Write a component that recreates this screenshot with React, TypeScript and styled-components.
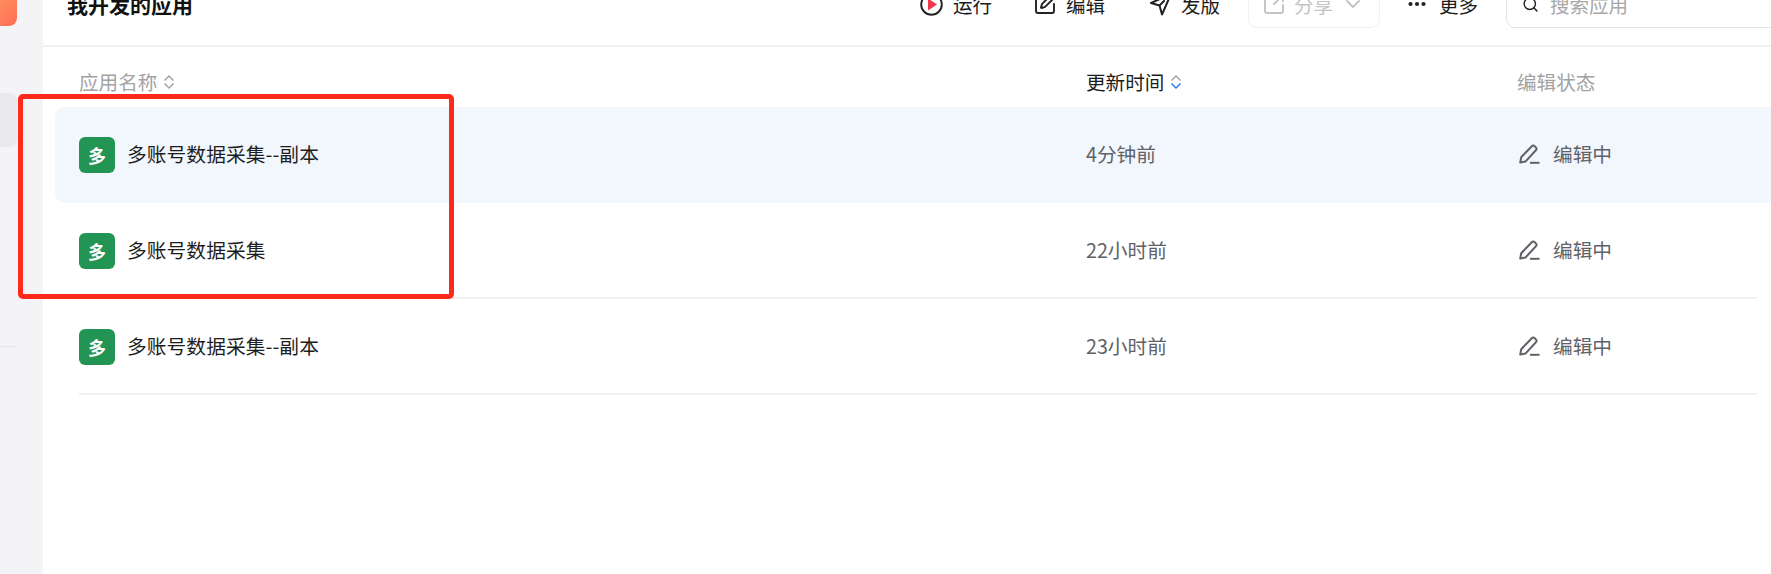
import React from 'react';
import styled, { createGlobalStyle } from 'styled-components';
import { Search, SquarePen, SquareArrowOutUpRight, ChevronDown } from 'lucide-react';

const GlobalStyle = createGlobalStyle`
    html, body {
        margin: 0;
        padding: 0;
        height: 100%;
        overflow: hidden;
        background: #ffffff;
        font-family: "Noto Sans CJK SC", "Liberation Sans", sans-serif;
    }
    #root {
        height: 100%;
    }
`;

const Layout = styled.div`
    display: flex;
    height: 100%;
`;

const Sidebar = styled.aside`
    width: 43px;
    flex-shrink: 0;
    display: flex;
    flex-direction: column;
    background: #f4f4f6;
`;

const BrandTile = styled.div`
    width: 17px;
    height: 26px;
    border-radius: 0 0 8px 0;
    background: linear-gradient(135deg, #ff8a5c, #ff6f55);
`;

const NavItem = styled.div`
    width: 17px;
    height: 54px;
    margin-top: 67px;
    border-radius: 0 8px 8px 0;
    background: #e9e9eb;
`;

const NavDivider = styled.div`
    width: 17px;
    height: 1px;
    margin-top: 199px;
    background: #e6e6e8;
`;

const Main = styled.main`
    flex: 1;
    min-width: 0;
    overflow: hidden;
`;

const Header = styled.header`
    height: 45px;
    box-sizing: content-box;
    display: flex;
    align-items: flex-end;
    padding-left: 24px;
    border-bottom: 2px solid #f1f1f2;
    overflow: hidden;
`;

const Title = styled.h1`
    width: 853px;
    flex-shrink: 0;
    margin: 0 0 27px;
    font-size: 21px;
    line-height: 28px;
    font-weight: 700;
    color: #111111;
`;

const ToolButton = styled.div<{ $width: number; $gap?: number }>`
    width: ${(p) => p.$width}px;
    flex-shrink: 0;
    display: flex;
    align-items: center;
    gap: ${(p) => p.$gap ?? 10}px;
    margin-bottom: 27px;
    height: 28px;
    font-size: 19.5px;
    color: #1c1c1c;
`;

const EditIcon = styled(SquarePen)`
    margin: 0 -1px 0 -2px;
`;

const ShareIcon = styled(SquareArrowOutUpRight)`
    margin: 0 -1px 0 -2px;
`;

const ShareChevron = styled(ChevronDown)`
    margin-left: -1px;
`;

const ShareBox = styled.div`
    width: 132px;
    height: 44px;
    flex-shrink: 0;
    box-sizing: border-box;
    display: flex;
    align-items: center;
    gap: 9px;
    padding: 0 0 4px 15px;
    margin: 0 28px 17px 0;
    border: 1.5px solid #f0f0f0;
    border-radius: 9px;
    font-size: 19.5px;
    color: #c4c4c4;
`;

const SearchBox = styled.div`
    flex: 1;
    height: 44px;
    box-sizing: border-box;
    display: flex;
    align-items: center;
    gap: 11px;
    padding: 0 0 4px 15px;
    margin: 0 -12px 17px 0;
    border: 1.5px solid #e4e4e6;
    border-radius: 9px;
    font-size: 19.5px;
    color: #a8a8a8;
`;

const Table = styled.section`
    padding-left: 12px;
`;

const RowShell = styled.div<{ $active?: boolean }>`
    padding-left: 24px;
    border-radius: 10px 0 0 10px;
    background: ${(p) => (p.$active ? '#f2f6fd' : 'transparent')};
`;

const RowGrid = styled.div<{ $divided?: boolean; $head?: boolean }>`
    display: grid;
    grid-template-columns: 1007px 431px 1fr;
    align-items: center;
    height: ${(p) => (p.$head ? '60px' : '96px')};
    margin-right: 14px;
    box-shadow: ${(p) => (p.$divided ? 'inset 0 -2px 0 #f0f0f1' : 'none')};
`;

const HeadCell = styled.div<{ $dark?: boolean }>`
    display: flex;
    align-items: center;
    gap: 6px;
    padding-top: 9px;
    font-size: 19.6px;
    color: ${(p) => (p.$dark ? '#1c1c1c' : '#a3a3a3')};
`;

const NameCell = styled.div`
    display: flex;
    align-items: center;
    gap: 12px;
    font-size: 19.7px;
    color: #1d1d1d;
`;

const AppName = styled.span`
    margin-bottom: 3px;
    letter-spacing: 0.1px;
`;

const AppBadge = styled.span`
    width: 36px;
    height: 36px;
    display: flex;
    align-items: center;
    justify-content: center;
    border-radius: 6px;
    background: #229453;
    color: #ffffff;
    font-size: 18px;
    font-weight: 700;
`;

const TimeCell = styled.div`
    padding-bottom: 3px;
    font-size: 19.7px;
    color: #5f6266;
`;

const StatusCell = styled.div`
    display: flex;
    align-items: center;
    gap: 13px;
    padding: 0 0 3px 2px;
    font-size: 19.7px;
    color: #5f6266;
`;

const Annotation = styled.div`
    position: absolute;
    left: 18px;
    top: 94px;
    width: 436px;
    height: 205px;
    box-sizing: border-box;
    border: 5px solid #ff2a1a;
    border-radius: 5px;
    pointer-events: none;
`;

const PlayIcon = () => (
    <svg width="23" height="23" viewBox="0 0 23 23" fill="none">
        <circle cx="11.5" cy="11.5" r="10.3" stroke="#222" strokeWidth="1.9" />
        <path d="M8 5.5 17 11.5 8 17.5Z" fill="#f0384d" />
    </svg>
);

const SendIcon = () => (
    <svg width="22" height="23" viewBox="0 0 22 23" fill="none">
        <path d="M21 1 1 10 9.5 12.5 12 21.5Z M9.5 12.5 14 8" stroke="#222" strokeWidth="2" strokeLinejoin="round" strokeLinecap="round" />
    </svg>
);

const DotsIcon = () => (
    <svg width="18" height="6" viewBox="0 0 18 6">
        <circle cx="2.5" cy="3" r="2.1" fill="#222" />
        <circle cx="9" cy="3" r="2.1" fill="#222" />
        <circle cx="15.5" cy="3" r="2.1" fill="#222" />
    </svg>
);

const SortIcon = ({ active }: { active?: boolean }) => (
    <svg width="12" height="16" viewBox="0 0 12 16" fill="none" strokeWidth="1.5">
        <path d="M1.5 6.5 6 2 10.5 6.5" stroke="#a3a3a3" />
        <path d="M1.5 9.5 6 14 10.5 9.5" stroke={active ? '#2f7cf6' : '#a3a3a3'} />
    </svg>
);

const PencilIcon = () => (
    <svg width="21" height="20" viewBox="0 0 21 20" fill="none" stroke="#5f6266" strokeWidth="2">
        <path d="M1.2 18.6 2.2 13.2 12.8 2.2a2 2 0 0 1 2.9 0l1.2 1.2a2 2 0 0 1 0 2.8L6.4 17.6Z" strokeLinejoin="round" />
        <path d="M11 18.8h9.5" />
    </svg>
);

const apps = [
    { name: '多账号数据采集--副本', time: '4分钟前', active: true, divided: false },
    { name: '多账号数据采集', time: '22小时前', active: false, divided: true },
    { name: '多账号数据采集--副本', time: '23小时前', active: false, divided: true },
];

export default function App() {
    return (
        <Layout>
            <GlobalStyle />
            <Sidebar>
                <BrandTile />
                <NavItem />
                <NavDivider />
            </Sidebar>
            <Main>
                <Header>
                    <Title>我开发的应用</Title>
                    <ToolButton $width={115}><PlayIcon />运行</ToolButton>
                    <ToolButton $width={115}><EditIcon size={24} color="#222" strokeWidth={1.9} />编辑</ToolButton>
                    <ToolButton $width={98} $gap={9}><SendIcon />发版</ToolButton>
                    <ShareBox>
                        <ShareIcon size={24} strokeWidth={1.9} />
                        分享
                        <ShareChevron size={24} strokeWidth={1.9} />
                    </ShareBox>
                    <ToolButton $width={98} $gap={13}><DotsIcon />更多</ToolButton>
                    <SearchBox><Search size={17} color="#222" strokeWidth={2} />搜索应用</SearchBox>
                </Header>
                <Table>
                    <RowShell>
                        <RowGrid $head>
                            <HeadCell>应用名称<SortIcon /></HeadCell>
                            <HeadCell $dark>更新时间<SortIcon active /></HeadCell>
                            <HeadCell>编辑状态</HeadCell>
                        </RowGrid>
                    </RowShell>
                    {apps.map((app, i) => (
                        <RowShell key={i} $active={app.active}>
                            <RowGrid $divided={app.divided}>
                                <NameCell><AppBadge>多</AppBadge><AppName>{app.name}</AppName></NameCell>
                                <TimeCell>{app.time}</TimeCell>
                                <StatusCell><PencilIcon />编辑中</StatusCell>
                            </RowGrid>
                        </RowShell>
                    ))}
                </Table>
            </Main>
            <Annotation />
        </Layout>
    );
}
